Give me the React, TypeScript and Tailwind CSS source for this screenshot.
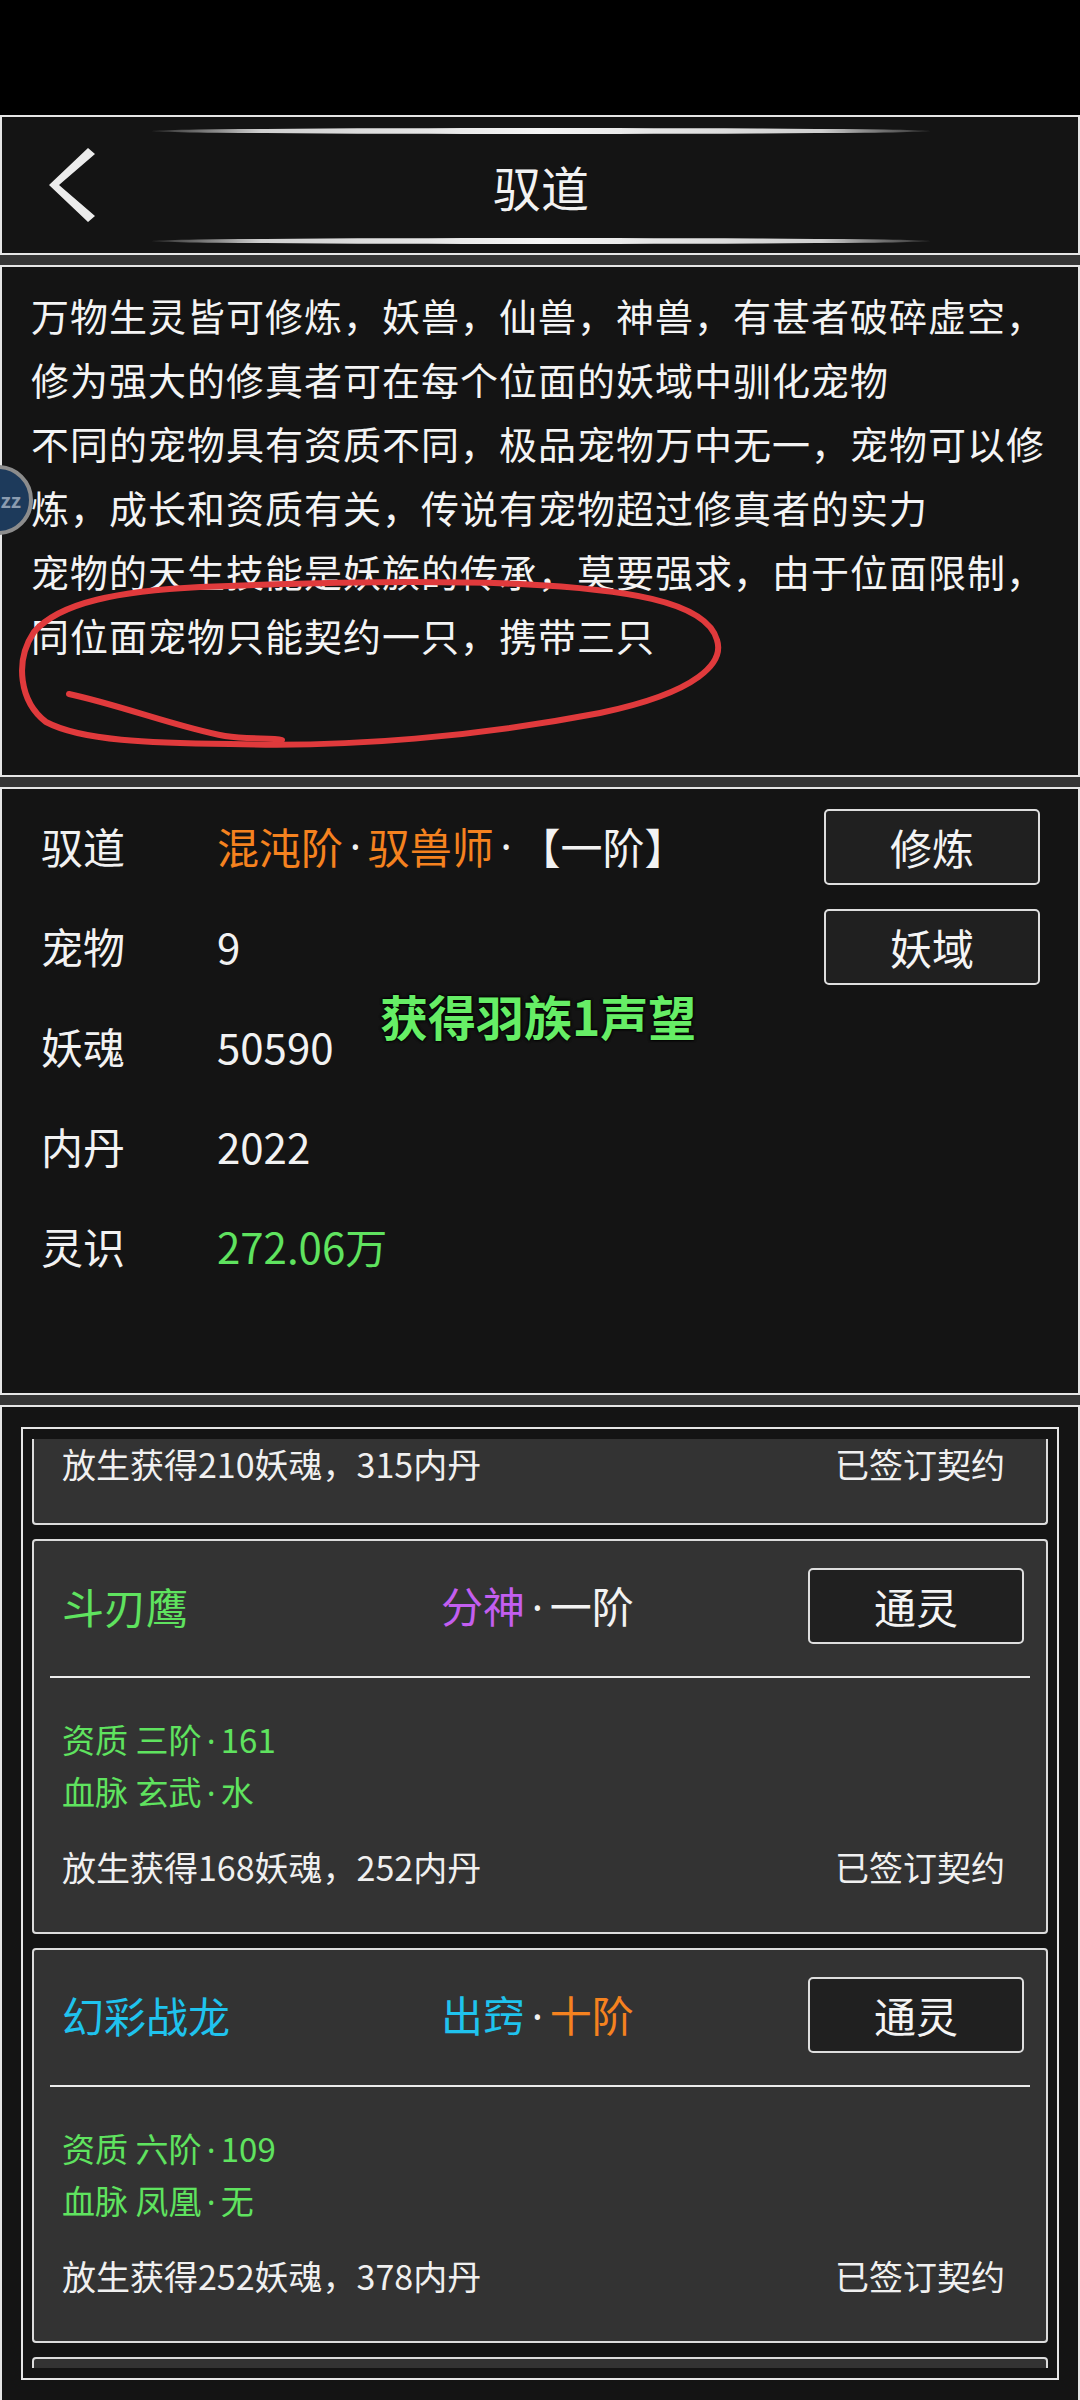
import React from "react";

type Pet = {
  name: string;
  nameColor: string;
  realm: string;
  realmColor: string;
  stage: string;
  stageColor: string;
  aptitude: string;
  blood: string;
  release: string;
};

const pets: Pet[] = [
  {
    name: "斗刃鹰",
    nameColor: "text-[#5fe35f]",
    realm: "分神",
    realmColor: "text-[#c35ef0]",
    stage: "一阶",
    stageColor: "text-[#f2f2f2]",
    aptitude: "资质 三阶·161",
    blood: "血脉 玄武·水",
    release: "放生获得168妖魂，252内丹",
  },
  {
    name: "幻彩战龙",
    nameColor: "text-[#1fc3ee]",
    realm: "出窍",
    realmColor: "text-[#1fc3ee]",
    stage: "十阶",
    stageColor: "text-[#f5821f]",
    aptitude: "资质 六阶·109",
    blood: "血脉 凤凰·无",
    release: "放生获得252妖魂，378内丹",
  },
];

const stats = [
  { label: "宠物", value: "9", color: "text-[#f2f2f2]" },
  { label: "妖魂", value: "50590", color: "text-[#f2f2f2]" },
  { label: "内丹", value: "2022", color: "text-[#f2f2f2]" },
  { label: "灵识", value: "272.06万", color: "text-[#5fe35f]" },
];

// the game font draws a narrow middle dot, the CJK one is full width
function Dot({ className = "" }: { className?: string }) {
  return <span className={`mx-[0.16em] font-['Noto_Sans',sans-serif] ${className}`}>·</span>;
}

function WithDots({ text }: { text: string }) {
  const parts = text.split("·");
  return (
    <>
      {parts.map((p, i) => (
        <React.Fragment key={i}>
          {i > 0 && <Dot />}
          {p}
        </React.Fragment>
      ))}
    </>
  );
}

function Strip() {
  return <div className="h-[10px] bg-[#353535]" />;
}

function GlowLine() {
  return (
    <div className="h-[6px] w-full rounded-[50%] bg-[linear-gradient(to_right,#2a2a2a,#cfcfcf_14%,#f4f4f4_50%,#cfcfcf_86%,#2a2a2a)]" />
  );
}

function GameButton({ label }: { label: string }) {
  return (
    <button className="flex h-[76px] w-[216px] items-center justify-center rounded-[5px] border-2 border-[#dedede] bg-[#202020] text-[42px] leading-none text-[#f4f4f4]">
      {label}
    </button>
  );
}

function ReleaseRow({ text }: { text: string }) {
  return (
    <div className="flex items-center justify-between pl-[28px] pr-[41px] text-[34px] leading-[50px] text-[#f0f0f0]">
      <span>{text}</span>
      <span>已签订契约</span>
    </div>
  );
}

function PetCard({ pet }: { pet: Pet }) {
  return (
    <div className="shrink-0 rounded-[4px] border-2 border-[#dcdcdc] bg-[#333333] pb-[40px]">
      <div className="mt-[27px] flex h-[76px] items-center pl-[28px] pr-[22px]">
        <span className={`w-[379px] text-[42px] leading-none ${pet.nameColor}`}>{pet.name}</span>
        <span className="flex-1 text-[42px] leading-none">
          <span className={pet.realmColor}>{pet.realm}</span>
          <Dot className="text-[#f2f2f2]" />
          <span className={pet.stageColor}>{pet.stage}</span>
        </span>
        <GameButton label="通灵" />
      </div>
      <div className="mx-[16px] mt-[32px] h-[2px] bg-[#ececec]" />
      <div className="mt-[36px] pl-[28px] text-[33px] leading-[50px] text-[#5fe35f]">
        <div>
          <WithDots text={pet.aptitude} />
        </div>
        <div>
          <WithDots text={pet.blood} />
        </div>
      </div>
      <div className="mt-[24px]">
        <ReleaseRow text={pet.release} />
      </div>
    </div>
  );
}

export default function App() {
  return (
    <div className="relative h-[2400px] w-[1080px] overflow-hidden bg-black font-['Noto_Sans_CJK_SC','Noto_Sans',sans-serif]">
      <div className="h-[115px]" />

      {/* header */}
      <div className="h-[140px] border-2 border-[#e6e6e6] bg-[#141414]">
        <div className="flex pl-[45px]">
          <div className="flex h-[136px] w-[48px] items-center">
            <svg width="48" height="76" viewBox="45 147 48 76">
              <polygon points="86,148 93,154 57,185 93,216 86,222 47,185" fill="#ececec" />
            </svg>
          </div>
          <div className="ml-[57px] flex w-[778px] flex-col pt-[11px]">
            <GlowLine />
            <div className="flex h-[104px] items-center justify-center text-[48px] leading-none text-[#f2f2f2]">
              驭道
            </div>
            <GlowLine />
          </div>
        </div>
      </div>
      <Strip />

      {/* description */}
      <div className="relative h-[512px] border-2 border-[#e6e6e6] bg-[#141414] pl-[29px] pr-[20px] pt-[16px] text-[38px] leading-[64px] tracking-[1px] text-[#f4f4f4]">
        <p>万物生灵皆可修炼，妖兽，仙兽，神兽，有甚者破碎虚空，修为强大的修真者可在每个位面的妖域中驯化宠物</p>
        <p>不同的宠物具有资质不同，极品宠物万中无一，宠物可以修炼，成长和资质有关，传说有宠物超过修真者的实力</p>
        <p>宠物的天生技能是妖族的传承，莫要强求，由于位面限制，同位面宠物只能契约一只，携带三只</p>
        <svg className="pointer-events-none absolute left-[-2px] top-[-2px]" width="1080" height="512" viewBox="0 265 1080 512">
          <path
            d="M230 744 C350 748 480 736 600 713 C700 692 724 662 717 640 C706 600 620 589 520 584 C420 580 300 583 200 587 C120 591 60 602 34 632 C14 662 20 702 46 722 C82 741 150 743 230 744"
            fill="none"
            stroke="#e03a3c"
            strokeWidth="6"
            strokeLinecap="round"
          />
          <path
            d="M69 694 C120 705 180 728 225 736 C250 740 272 737 282 740"
            fill="none"
            stroke="#e03a3c"
            strokeWidth="6"
            strokeLinecap="round"
          />
        </svg>
      </div>
      <Strip />

      {/* stats */}
      <div className="relative flex h-[608px] border-2 border-[#e6e6e6] bg-[#141414] pt-[7px]">
        <div className="flex flex-1 flex-col pl-[39px]">
          <div className="flex h-[100px] items-center text-[42px] leading-none">
            <span className="w-[176px] text-[#f2f2f2]">驭道</span>
            <span className="text-[#f5821f]">混沌阶</span>
            <Dot className="text-[#f2f2f2]" />
            <span className="text-[#f5821f]">驭兽师</span>
            <Dot className="text-[#f2f2f2]" />
            <span className="text-[#f2f2f2]">【一阶】</span>
          </div>
          {stats.map((s) => (
            <div key={s.label} className="flex h-[100px] items-center text-[42px] leading-none">
              <span className="w-[176px] text-[#f2f2f2]">{s.label}</span>
              <span className={s.color}>{s.value}</span>
            </div>
          ))}
        </div>
        <div className="mr-[38px] flex flex-col gap-[24px] pt-[13px]">
          <GameButton label="修炼" />
          <GameButton label="妖域" />
        </div>
        <div className="absolute left-[378px] top-[198px] text-[48px] font-bold leading-[56px] text-[#66ee66] [text-shadow:0_0_3px_#000,0_0_3px_#000,0_0_2px_#000]">
          获得羽族1声望
        </div>
      </div>
      <Strip />

      {/* pet list */}
      <div className="h-[995px] border-x-2 border-t-2 border-[#e6e6e6] bg-[#141414] px-[19px] pt-[20px]">
        <div className="h-[953px] border-2 border-[#e6e6e6] px-[9px] pt-[10px]">
          <div className="flex h-[929px] flex-col gap-[14px] overflow-hidden">
            <div className="h-[86px] shrink-0 rounded-b-[4px] border-x-2 border-b-2 border-[#dcdcdc] bg-[#333333]">
              <ReleaseRow text="放生获得210妖魂，315内丹" />
            </div>
            {pets.map((p) => (
              <PetCard key={p.name} pet={p} />
            ))}
            <div className="h-[120px] shrink-0 rounded-[4px] border-2 border-[#dcdcdc] bg-[#333333]" />
          </div>
        </div>
      </div>

      {/* floating assistant ball */}
      <div className="absolute left-[-37px] top-[465px] flex h-[70px] w-[70px] items-center justify-end rounded-full border-[4px] border-[#8c8c8c] bg-[#1d3a5b] pr-[8px] text-[20px] font-bold leading-none text-[#8a9bb0]">
        zz
      </div>
    </div>
  );
}
